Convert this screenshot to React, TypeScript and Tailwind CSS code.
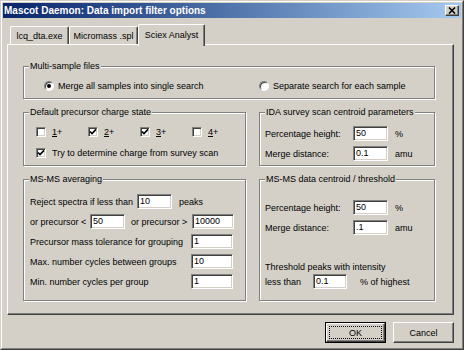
import React from "react";

const sunken =
  "bg-white border border-t-[#808080] border-l-[#808080] border-b-white border-r-white shadow-[inset_1px_1px_0_#404040,inset_-1px_-1px_0_#d4d0c8]";
const raised =
  "border border-t-white border-l-white border-b-[#404040] border-r-[#404040] shadow-[inset_-1px_-1px_0_#808080,inset_1px_1px_0_#d4d0c8]";

function Field({ value, w }: { value: string; w: string }) {
  return (
    <div className={`${w} h-[15px] ${sunken} flex items-center pl-[2px] leading-none shrink-0`}>
      {value}
    </div>
  );
}

function Radio({ checked }: { checked?: boolean }) {
  return (
    <div className="w-[10px] h-[10px] rounded-full bg-white border border-t-[#808080] border-l-[#808080] border-b-white border-r-white shadow-[inset_1px_1px_0_#404040] flex items-center justify-center shrink-0">
      {checked && <div className="w-[4px] h-[4px] rounded-full bg-black" />}
    </div>
  );
}

function Check({ checked }: { checked?: boolean }) {
  return (
    <div className={`w-[10px] h-[10px] ${sunken} flex items-center justify-center shrink-0`}>
      {checked && (
        <svg width="8" height="8" viewBox="0 0 8 8">
          <path d="M1 3.5 L3 5.6 L7 1.4" stroke="black" strokeWidth="1.6" fill="none" />
        </svg>
      )}
    </div>
  );
}

function Group({
  title,
  className,
  children,
}: {
  title: string;
  className: string;
  children: React.ReactNode;
}) {
  return (
    <div
      className={`relative flex flex-col border border-[#808080] shadow-[inset_1px_1px_0_#fff,1px_1px_0_#fff] ${className}`}
    >
      <span className="absolute left-[5px] -top-[7px] bg-[#d4d0c8] px-[1px] leading-[12px] whitespace-nowrap">
        {title}
      </span>
      {children}
    </div>
  );
}

export default function App() {
  return (
    <div className="w-[464px] h-[350px] bg-[#d4d0c8] border border-t-[#d4d0c8] border-l-[#d4d0c8] border-b-[#404040] border-r-[#404040] font-['Liberation_Sans',Arial,sans-serif] text-[9px] text-black leading-[12px] overflow-hidden">
      <div className="w-full h-full border border-t-white border-l-white border-b-[#808080] border-r-[#808080] p-[1px] flex flex-col">
        {/* Title bar */}
        <div className="h-[15px] shrink-0 flex items-center justify-between bg-linear-to-r from-[#0a246a] to-[#a6caf0] pl-[1px] pr-[2px]">
          <span className="text-white font-bold text-[10px] leading-none whitespace-nowrap">
            Mascot Daemon: Data import filter options
          </span>
          <div className={`w-[14px] h-[11px] bg-[#d4d0c8] ${raised} flex items-center justify-center`}>
            <svg width="8" height="7" viewBox="0 0 8 7">
              <path d="M1 0.5 L7 6.5 M7 0.5 L1 6.5" stroke="black" strokeWidth="1.6" fill="none" />
            </svg>
          </div>
        </div>

        {/* Body */}
        <div className="flex flex-col pl-[4px] pt-[6px]">
          {/* Tabs */}
          <div className="flex items-end h-[20px] pl-[3px]">
            <div className="w-[59px] h-[18px] border-t border-l border-r border-t-white border-l-white border-r-[#404040] shadow-[inset_-1px_0_0_#808080] rounded-t-[2px] flex items-center justify-center whitespace-nowrap">
              lcq_dta.exe
            </div>
            <div className="w-[69px] h-[18px] border-t border-l border-r border-t-white border-l-white border-r-[#404040] shadow-[inset_-1px_0_0_#808080] rounded-t-[2px] flex items-center justify-center whitespace-nowrap">
              Micromass .spl
            </div>
            <div className="relative z-10 w-[67px] h-[22px] -mb-[2px] bg-[#d4d0c8] border-t border-l border-r border-t-white border-l-white border-r-[#404040] shadow-[inset_-1px_0_0_#808080] rounded-t-[2px] flex justify-center pt-[4px] whitespace-nowrap">
              Sciex Analyst
            </div>
          </div>

          {/* Panel */}
          <div className="w-[447px] h-[271px] border border-t-white border-l-white border-b-[#404040] border-r-[#404040] shadow-[inset_-1px_-1px_0_#808080] pt-[21px] pl-[15px] flex flex-col">
            <Group title="Multi-sample files" className="w-[412px] h-[33px]">
              <div className="flex items-center h-[12px] mt-[13px] pl-[20px]">
                <div className="flex items-center gap-[4px] w-[215px]">
                  <Radio checked />
                  <span className="whitespace-nowrap">Merge all samples into single search</span>
                </div>
                <div className="flex items-center gap-[4px]">
                  <Radio />
                  <span className="whitespace-nowrap">Separate search for each sample</span>
                </div>
              </div>
            </Group>

            <div className="flex gap-[13px] mt-[13px]">
              <Group title="Default precursor charge state" className="w-[223px] h-[54px]">
                <div className="flex items-center h-[10px] mt-[14px] pl-[12px]">
                  <div className="w-[52px] flex items-center gap-[6px]">
                    <Check />
                    <span>
                      <span className="underline">1</span>+
                    </span>
                  </div>
                  <div className="w-[52px] flex items-center gap-[6px]">
                    <Check checked />
                    <span>
                      <span className="underline">2</span>+
                    </span>
                  </div>
                  <div className="w-[52px] flex items-center gap-[6px]">
                    <Check checked />
                    <span>
                      <span className="underline">3</span>+
                    </span>
                  </div>
                  <div className="w-[52px] flex items-center gap-[6px]">
                    <Check />
                    <span>
                      <span className="underline">4</span>+
                    </span>
                  </div>
                </div>
                <div className="flex items-center gap-[6px] h-[10px] mt-[11px] pl-[12px]">
                  <Check checked />
                  <span className="whitespace-nowrap">Try to determine charge from survey scan</span>
                </div>
              </Group>

              <Group title="IDA survey scan centroid parameters" className="w-[176px] h-[54px]">
                <div className="flex items-center h-[15px] mt-[13px] pl-[5px]">
                  <span className="w-[88px] whitespace-nowrap">Percentage height:</span>
                  <Field w="w-[35px]" value="50" />
                  <span className="ml-[7px]">%</span>
                </div>
                <div className="flex items-center h-[15px] mt-[5px] pl-[5px]">
                  <span className="w-[88px] whitespace-nowrap">Merge distance:</span>
                  <Field w="w-[35px]" value="0.1" />
                  <span className="ml-[7px]">amu</span>
                </div>
              </Group>
            </div>

            <div className="flex gap-[13px] mt-[13px]">
              <Group title="MS-MS averaging" className="w-[223px] h-[122px]">
                <div className="flex items-center h-[15px] mt-[14px] pl-[6px]">
                  <span className="w-[107px] whitespace-nowrap">Reject spectra if less than</span>
                  <Field w="w-[35px]" value="10" />
                  <span className="ml-[7px]">peaks</span>
                </div>
                <div className="flex items-center h-[15px] mt-[5px] pl-[6px]">
                  <span className="w-[60px] whitespace-nowrap">or precursor &lt;</span>
                  <Field w="w-[35px]" value="50" />
                  <span className="ml-[6px] w-[61px] whitespace-nowrap">or precursor &gt;</span>
                  <Field w="w-[42px]" value="10000" />
                </div>
                <div className="flex items-center h-[15px] mt-[5px] pl-[6px]">
                  <span className="w-[161px] whitespace-nowrap">Precursor mass tolerance for grouping</span>
                  <Field w="w-[42px]" value="1" />
                </div>
                <div className="flex items-center h-[15px] mt-[5px] pl-[6px]">
                  <span className="w-[161px] whitespace-nowrap">Max. number cycles between groups</span>
                  <Field w="w-[42px]" value="10" />
                </div>
                <div className="flex items-center h-[15px] mt-[5px] pl-[6px]">
                  <span className="w-[161px] whitespace-nowrap">Min. number cycles per group</span>
                  <Field w="w-[42px]" value="1" />
                </div>
              </Group>

              <Group title="MS-MS data centroid / threshold" className="w-[176px] h-[122px]">
                <div className="flex items-center h-[15px] mt-[20px] pl-[5px]">
                  <span className="w-[88px] whitespace-nowrap">Percentage height:</span>
                  <Field w="w-[35px]" value="50" />
                  <span className="ml-[7px]">%</span>
                </div>
                <div className="flex items-center h-[15px] mt-[5px] pl-[5px]">
                  <span className="w-[88px] whitespace-nowrap">Merge distance:</span>
                  <Field w="w-[35px]" value=".1" />
                  <span className="ml-[7px]">amu</span>
                </div>
                <div className="mt-[26px] pl-[5px] leading-[12px] whitespace-nowrap">
                  Threshold peaks with intensity
                </div>
                <div className="flex items-center h-[15px] mt-[1px] pl-[5px]">
                  <span className="w-[48px] whitespace-nowrap">less than</span>
                  <Field w="w-[34px]" value="0.1" />
                  <span className="ml-[13px] whitespace-nowrap">% of highest</span>
                </div>
              </Group>
            </div>
          </div>

          {/* Buttons */}
          <div className="w-[447px] flex justify-end gap-[7px] mt-[7px]">
            <div className="w-[61px] h-[21px] border border-black">
              <div className="w-full h-full border border-t-white border-l-white border-b-[#404040] border-r-[#404040] shadow-[inset_-1px_-1px_0_#808080] p-[2px]">
                <div className="w-full h-full border border-dotted border-black flex items-center justify-center">
                  OK
                </div>
              </div>
            </div>
            <div className={`w-[61px] h-[21px] ${raised} flex items-center justify-center`}>
              Cancel
            </div>
          </div>
        </div>
      </div>
    </div>
  );
}
